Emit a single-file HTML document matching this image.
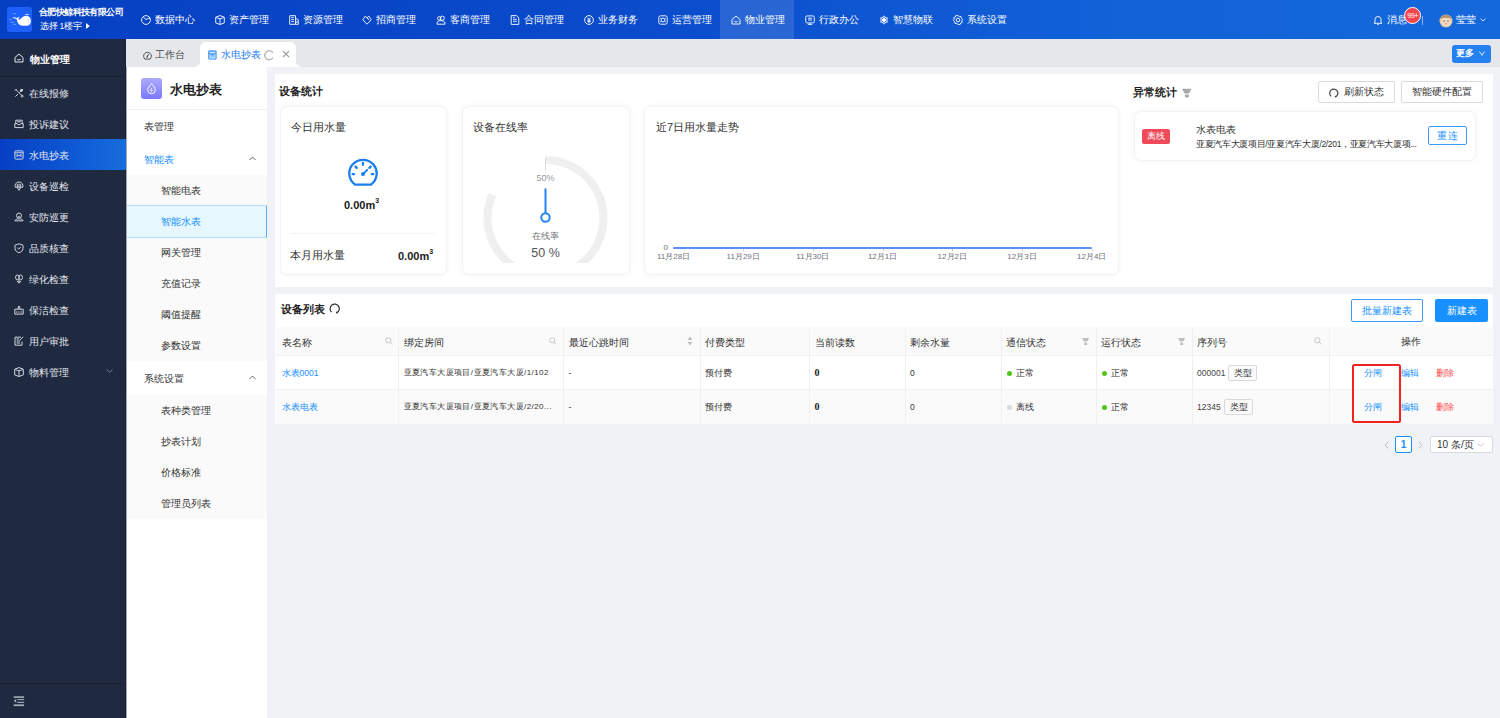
<!DOCTYPE html><html><head><meta charset="utf-8"><title>水电抄表</title><style>
*{box-sizing:border-box;margin:0;padding:0}
html,body{width:1500px;height:718px;overflow:hidden;background:#f0f2f5;font-family:"Liberation Sans",sans-serif;color:#262626}
.a{position:absolute;white-space:nowrap}
svg{display:block}
</style></head><body>
<div class="a" style="left:0;top:0;width:1500px;height:39px;background:linear-gradient(90deg,#0640c2 0%,#0a4acb 40%,#1262d8 75%,#1568dc 100%)"></div>
<div class="a" style="left:7px;top:7px;width:25px;height:25px;background:#1e60fb;border-radius:3px">
<svg width="25" height="25" viewBox="0 0 25 25">
<path d="M10 12.8C10.3 16.5 12.3 18.7 16 18.7L20 18.7C22.6 18.7 24 16.5 23.9 13.6C23.8 10.6 21.6 8.8 19 8.8C15.6 8.8 14.2 12.3 11.8 12.8Z" fill="#fff"/>
<path d="M10.6 13.4L8.6 11.6C7.6 11.3 6.6 11.6 5.6 11C6.6 9.9 8.4 10.2 9.6 11.2C10.4 10.4 11.5 10.1 12.6 10.6C11.8 11.2 11.4 12.2 11.3 13.2Z" fill="#fff"/>
<path d="M6 6.6h3.2 M2.2 12.4h2.8 M3.4 15.3h3.6 M6.1 17.4h3" stroke="#cfe0ff" stroke-width="0.55" opacity="0.8"/>
<path d="M18.6 7.4h3" stroke="#fff" stroke-width="0.9" stroke-linecap="round" opacity="0.85"/>
<circle cx="21.5" cy="12.6" r="0.5" fill="#9bb8ff"/><circle cx="21.5" cy="15" r="0.5" fill="#9bb8ff"/>
</svg></div>
<div class="a" style="left:39px;top:6px;font-size:9px;font-weight:bold;color:#fff;line-height:12px;letter-spacing:-0.6px">合肥快鲸科技有限公司</div>
<div class="a" style="left:39.5px;top:20px;font-size:8.5px;color:#fff;line-height:12px">选择</div><div class="a" style="left:59.5px;top:20px;font-size:8.5px;color:#fff;line-height:12px">1</div><div class="a" style="left:64px;top:20px;font-size:8.5px;color:#fff;line-height:12px">楼宇</div>
<svg class="a" style="left:86px;top:22.5px" width="4" height="6" viewBox="0 0 4 6" fill="#fff"><path d="M0 0l3.8 3L0 6z"/></svg>
<div class="a" style="left:130.0px;top:0;width:74px;height:39px;"><svg class="a" style="left:11px;top:15px" width="10" height="10" viewBox="0 0 10 10" fill="none" stroke="#fff" stroke-width="0.9"><circle cx="5" cy="5" r="4.4"/><path d="M2.4 2.2L5 4.6l2.3-1.3h2"/></svg><div class="a" style="left:25px;top:14px;font-size:10px;line-height:11px;color:#fff">数据中心</div></div>
<div class="a" style="left:203.8px;top:0;width:74px;height:39px;"><svg class="a" style="left:11px;top:15px" width="10" height="10" viewBox="0 0 10 10" fill="none" stroke="#fff" stroke-width="0.9"><path d="M5 0.6l4.3 1.6v5.7L5 9.5 0.7 7.9V2.2z M1.2 2.5L5 3.9l3.8-1.4 M5 3.9v5.3"/></svg><div class="a" style="left:25px;top:14px;font-size:10px;line-height:11px;color:#fff">资产管理</div></div>
<div class="a" style="left:277.6px;top:0;width:74px;height:39px;"><svg class="a" style="left:11px;top:15px" width="10" height="10" viewBox="0 0 10 10" fill="none" stroke="#fff" stroke-width="0.9"><path d="M0.7 0.7h5.8v8.6H0.7z M6.5 3.2l2.8 1.6v4.5H6.5 M2.3 2.6h2.6 M2.3 4.6h2.6 M2.3 6.6h2.6 M7.9 5.8v2.2"/></svg><div class="a" style="left:25px;top:14px;font-size:10px;line-height:11px;color:#fff">资源管理</div></div>
<div class="a" style="left:351.4px;top:0;width:74px;height:39px;"><svg class="a" style="left:11px;top:15px" width="10" height="10" viewBox="0 0 10 10" fill="none" stroke="#fff" stroke-width="0.9"><path d="M5 2.8L3.2 1.2 0.8 4.8 5 9.2l4.2-4.4-2.4-3.6z M5 2.8l2 2.2"/></svg><div class="a" style="left:25px;top:14px;font-size:10px;line-height:11px;color:#fff">招商管理</div></div>
<div class="a" style="left:425.2px;top:0;width:74px;height:39px;"><svg class="a" style="left:11px;top:15px" width="10" height="10" viewBox="0 0 10 10" fill="none" stroke="#fff" stroke-width="0.9"><circle cx="3.2" cy="3.4" r="1.7"/><circle cx="6.3" cy="3.2" r="2.1"/><path d="M1 9.2h8V8c0-1.4-1.8-2.3-4-2.3S1 6.6 1 8z"/></svg><div class="a" style="left:25px;top:14px;font-size:10px;line-height:11px;color:#fff">客商管理</div></div>
<div class="a" style="left:499.0px;top:0;width:74px;height:39px;"><svg class="a" style="left:11px;top:15px" width="10" height="10" viewBox="0 0 10 10" fill="none" stroke="#fff" stroke-width="0.9"><path d="M1.2 0.6h5.3l2.3 2.3v6.5H1.2z M3 4.3h3.8 M3 6.3h3.8 M3 2.4h1.6"/></svg><div class="a" style="left:25px;top:14px;font-size:10px;line-height:11px;color:#fff">合同管理</div></div>
<div class="a" style="left:572.8px;top:0;width:74px;height:39px;"><svg class="a" style="left:11px;top:15px" width="10" height="10" viewBox="0 0 10 10" fill="none" stroke="#fff" stroke-width="0.9"><circle cx="5" cy="5" r="4.4"/><path d="M3.4 2.6L5 4.6l1.6-2 M3.3 5.1h3.4 M3.3 6.6h3.4 M5 4.6v3.6"/></svg><div class="a" style="left:25px;top:14px;font-size:10px;line-height:11px;color:#fff">业务财务</div></div>
<div class="a" style="left:646.6px;top:0;width:74px;height:39px;"><svg class="a" style="left:11px;top:15px" width="10" height="10" viewBox="0 0 10 10" fill="none" stroke="#fff" stroke-width="0.9"><rect x="0.8" y="0.8" width="8.4" height="8.4" rx="1.8"/><circle cx="5" cy="5" r="1.9"/><path d="M2.2 3l1 0.8 M7.8 3l-1 0.8 M2.2 7l1-0.8 M7.8 7l-1-0.8"/></svg><div class="a" style="left:25px;top:14px;font-size:10px;line-height:11px;color:#fff">运营管理</div></div>
<div class="a" style="left:720.4px;top:0;width:74px;height:39px;background:rgba(255,255,255,0.12);"><svg class="a" style="left:11px;top:15px" width="10" height="10" viewBox="0 0 10 10" fill="none" stroke="#fff" stroke-width="0.9"><path d="M1 4.5L5 1l4 3.5V9H1z M3.3 6.3c0.8 0.8 2.6 0.8 3.4 0"/></svg><div class="a" style="left:25px;top:14px;font-size:10px;line-height:11px;color:#fff">物业管理</div></div>
<div class="a" style="left:794.2px;top:0;width:74px;height:39px;"><svg class="a" style="left:11px;top:15px" width="10" height="10" viewBox="0 0 10 10" fill="none" stroke="#fff" stroke-width="0.9"><rect x="0.7" y="0.9" width="8.6" height="7" rx="1.5"/><path d="M2.8 9.4h4.4 M5 7.9v1.5 M3 3.2h4 M3 5h4"/></svg><div class="a" style="left:25px;top:14px;font-size:10px;line-height:11px;color:#fff">行政办公</div></div>
<div class="a" style="left:868.0px;top:0;width:74px;height:39px;"><svg class="a" style="left:11px;top:15px" width="10" height="10" viewBox="0 0 10 10" fill="none" stroke="#fff" stroke-width="0.9"><circle cx="5" cy="5" r="1.6" fill="#fff"/><circle cx="5" cy="5" r="3.2"/><path d="M5 0.6v1.2 M5 8.2v1.2 M1.2 2.8l1 0.6 M7.8 6.6l1 0.6 M8.8 2.8l-1 0.6 M2.2 6.6l-1 0.6"/></svg><div class="a" style="left:25px;top:14px;font-size:10px;line-height:11px;color:#fff">智慧物联</div></div>
<div class="a" style="left:941.8px;top:0;width:74px;height:39px;"><svg class="a" style="left:11px;top:15px" width="10" height="10" viewBox="0 0 10 10" fill="none" stroke="#fff" stroke-width="0.9"><path d="M5 0.5l1.3 1.1 1.7-0.1 0.3 1.7 1.3 1.1-0.8 1.5 0.5 1.6-1.6 0.6-0.6 1.6-1.7-0.2L5 9.5 3.7 8.4 2 8.5 1.7 6.8 0.4 5.7 1.2 4.2 0.7 2.6l1.6-0.6 0.6-1.6 1.7 0.2z"/><circle cx="5" cy="5" r="1.8"/></svg><div class="a" style="left:25px;top:14px;font-size:10px;line-height:11px;color:#fff">系统设置</div></div>
<svg class="a" style="left:1373px;top:15px" width="10" height="10" viewBox="0 0 10 10" fill="none" stroke="#fff" stroke-width="0.9"><path d="M2 7.5V4.5a3 3 0 0 1 6 0v3l1 0.8H1z M4 9.3h2"/></svg>
<div class="a" style="left:1387px;top:14px;font-size:10px;line-height:11px;color:#fff">消息</div>
<div class="a" style="left:1404px;top:7px;width:17px;height:17px;border-radius:50%;background:#f4454f;border:1px solid #fff;color:#fff;font-size:7px;line-height:15px;text-align:center;letter-spacing:-0.4px">99+</div>
<div class="a" style="left:1422px;top:15.5px;width:1px;height:9.5px;background:rgba(255,255,255,0.5)"></div>
<svg class="a" style="left:1439px;top:14px" width="14" height="14" viewBox="0 0 14 14"><circle cx="7" cy="7" r="6.5" fill="#e8c9a5"/><circle cx="7" cy="7.6" r="4.6" fill="#f3dcc3"/><path d="M1.5 5c1-3 3-4 5.5-4s4.5 1 5.5 4c-1.5-1-3-1.3-5.5-1.3S3 4 1.5 5z" fill="#b88a60"/><circle cx="5" cy="7" r="0.7" fill="#553"/><circle cx="9" cy="7" r="0.7" fill="#553"/><path d="M6 9.8h2" stroke="#a66" stroke-width="0.6"/></svg>
<div class="a" style="left:1456px;top:14px;font-size:10px;line-height:11px;color:#fff">莹莹</div>
<svg class="a" style="left:1480px;top:18px" width="6" height="4" viewBox="0 0 6 4" fill="none" stroke="#fff" stroke-width="0.8"><path d="M0.5 0.5L3 3l2.5-2.5"/></svg>
<div class="a" style="left:0;top:39px;width:126px;height:679px;background:#1f2940"></div>
<div class="a" style="left:0;top:76px;width:126px;height:1px;background:#19202f"></div>
<div class="a" style="left:125px;top:39px;width:1px;height:679px;background:#1a2138"></div>
<svg class="a" style="left:14px;top:53px" width="10" height="10" viewBox="0 0 10 10" fill="none" stroke="#fff" stroke-width="0.9"><path d="M1 4.5L5 1l4 3.5V9H1z M3.3 6.3c0.8 0.8 2.6 0.8 3.4 0"/></svg>
<div class="a" style="left:30px;top:53.5px;font-size:10px;font-weight:bold;line-height:11px;color:#fff">物业管理</div>
<svg class="a" style="left:13.5px;top:87.5px" width="10" height="10" viewBox="0 0 10 10" fill="none" stroke="#d2d6df" stroke-width="1"><path d="M1.5 1.2l6.8 6.8 M1 2.6l1.6-1.6 M6.8 8.2l1.5 1 0.9-0.9-1-1.5 M8.6 1.4L5.5 4.5 M8.6 1.4l-1.9 0.2-0.2 1.4 1.5 0.4z M4 6L1.4 8.6"/></svg>
<div class="a" style="left:29px;top:88px;font-size:10px;line-height:11px;color:#e3e7ee">在线报修</div>
<svg class="a" style="left:13.5px;top:118.5px" width="10" height="10" viewBox="0 0 10 10" fill="none" stroke="#d2d6df" stroke-width="1"><path d="M1.8 4.6V1.2h6.4v3.4 M0.8 4.6h2.4l0.7 1h2.2l0.7-1h2.4v4H0.8z M3.2 2.8h3.6"/></svg>
<div class="a" style="left:29px;top:119px;font-size:10px;line-height:11px;color:#e3e7ee">投诉建议</div>
<div class="a" style="left:0;top:139px;width:126px;height:31px;background:linear-gradient(90deg,#073fc4 0%,#0d55d2 50%,#176ddd 100%)"></div>
<svg class="a" style="left:13.5px;top:149.5px" width="10" height="10" viewBox="0 0 10 10" fill="none" stroke="#d2d6df" stroke-width="1"><rect x="0.9" y="0.9" width="8.2" height="8.2" rx="1"/><path d="M3 7V4.5l2 1.5 2-1.5V7 M0.9 2.8h8.2"/></svg>
<div class="a" style="left:29px;top:150px;font-size:10px;line-height:11px;color:#e3e7ee">水电抄表</div>
<svg class="a" style="left:13.5px;top:180.5px" width="10" height="10" viewBox="0 0 10 10" fill="none" stroke="#d2d6df" stroke-width="1"><path d="M1.2 6.2A4 4 0 1 1 8.8 6.2z M3.2 6.2L5 9.3l1.8-3.1 M3.3 3v3 M5 2.5v3.5 M6.7 3v3"/></svg>
<div class="a" style="left:29px;top:181px;font-size:10px;line-height:11px;color:#e3e7ee">设备巡检</div>
<svg class="a" style="left:13.5px;top:211.5px" width="10" height="10" viewBox="0 0 10 10" fill="none" stroke="#d2d6df" stroke-width="1"><circle cx="5" cy="3.6" r="2.5"/><path d="M4.2 4.4h1.6 M0.9 8.8c0.6-1.5 2-2 4.1-2s3.5 0.5 4.1 2z"/></svg>
<div class="a" style="left:29px;top:212px;font-size:10px;line-height:11px;color:#e3e7ee">安防巡更</div>
<svg class="a" style="left:13.5px;top:242.5px" width="10" height="10" viewBox="0 0 10 10" fill="none" stroke="#d2d6df" stroke-width="1"><path d="M5 0.8l4 1.4v3.2c0 2.4-2 3.7-4 4.4-2-0.7-4-2-4-4.4V2.2z M3.3 4.8l1.4 1.3 2.1-2.2"/></svg>
<div class="a" style="left:29px;top:243px;font-size:10px;line-height:11px;color:#e3e7ee">品质核查</div>
<svg class="a" style="left:13.5px;top:273.5px" width="10" height="10" viewBox="0 0 10 10" fill="none" stroke="#d2d6df" stroke-width="1"><ellipse cx="3.4" cy="3.4" rx="1.9" ry="2.4"/><ellipse cx="6.6" cy="3.4" rx="1.9" ry="2.4"/><path d="M5 5.8v3.7 M2.8 7.2L5 8.4l2.2-1.2"/></svg>
<div class="a" style="left:29px;top:274px;font-size:10px;line-height:11px;color:#e3e7ee">绿化检查</div>
<svg class="a" style="left:13.5px;top:304.5px" width="10" height="10" viewBox="0 0 10 10" fill="none" stroke="#d2d6df" stroke-width="1"><path d="M0.8 4.2h8.4v4.9H0.8z M3.8 4.2l0.9-3h0.6l0.9 3 M2.8 6.3v1.5 M5 6.3v1.5 M7.2 6.3v1.5"/></svg>
<div class="a" style="left:29px;top:305px;font-size:10px;line-height:11px;color:#e3e7ee">保洁检查</div>
<svg class="a" style="left:13.5px;top:335.5px" width="10" height="10" viewBox="0 0 10 10" fill="none" stroke="#d2d6df" stroke-width="1"><path d="M7 1.2H1v8h7V5.5 M2.6 3h2.4 M2.6 5h3.4 M2.6 7h3.4 M5.8 4.2L9.2 0.8"/></svg>
<div class="a" style="left:29px;top:336px;font-size:10px;line-height:11px;color:#e3e7ee">用户审批</div>
<svg class="a" style="left:13.5px;top:366.5px" width="10" height="10" viewBox="0 0 10 10" fill="none" stroke="#d2d6df" stroke-width="1"><path d="M5 0.6l4.3 1.6v5.7L5 9.5 0.7 7.9V2.2z M1.2 2.5L5 3.9l3.8-1.4 M5 3.9v5.3"/></svg>
<div class="a" style="left:29px;top:367px;font-size:10px;line-height:11px;color:#e3e7ee">物料管理</div>
<svg class="a" style="left:106px;top:369px" width="7" height="4" viewBox="0 0 7 4" fill="none" stroke="#8a93a6" stroke-width="0.8"><path d="M0.5 0.5L3.5 3.3l3-2.8"/></svg>
<div class="a" style="left:0;top:683px;width:125px;height:1px;background:#1b2130"></div>
<svg class="a" style="left:13px;top:696px" width="12" height="11" viewBox="0 0 12 11" fill="#a9afbc"><rect x="0.7" y="0.3" width="10.4" height="1.6"/><rect x="4.3" y="3.1" width="6.8" height="1"/><rect x="4.3" y="5.8" width="6.8" height="1.1"/><rect x="0.7" y="8.4" width="10.4" height="1.7"/><path d="M0.8 4.8L3.2 2.9v3.8z"/></svg>
<div class="a" style="left:126px;top:39px;width:1374px;height:28px;background:#e5e7ea"></div>
<svg class="a" style="left:142.5px;top:50.5px" width="9" height="9" viewBox="0 0 9 9" fill="none" stroke="#555" stroke-width="1"><path d="M1.9 8.1A3.9 3.9 0 1 1 7.1 8.1z" stroke-linejoin="round"/><path d="M4.3 5.6L5.6 3.2" stroke-width="1.1"/><circle cx="4.2" cy="5.8" r="0.9" fill="#555" stroke="none"/></svg>
<div class="a" style="left:155px;top:49px;font-size:10px;line-height:11px;color:#444">工作台</div>
<svg class="a" style="left:192.5px;top:42px" width="110" height="25" viewBox="0 0 110 25"><path d="M0 25c4 0 7-2 7-6V6c0-3.3 2.7-6 6-6h84c3.3 0 6 2.7 6 6v13c0 4 3 6 7 6z" fill="#fff"/></svg>
<svg class="a" style="left:208px;top:50px" width="9" height="10" viewBox="0 0 9 10"><rect x="0" y="0.3" width="8.8" height="9.4" rx="1.6" fill="#5ea6f8"/><path d="M1.8 2.5h5.2 M2 4.5v3.5h4.8V4.5 M3.5 6.2h1.8" stroke="#fff" stroke-width="0.8" fill="none"/></svg>
<div class="a" style="left:221px;top:49px;font-size:10px;line-height:11px;color:#1a7cf0">水电抄表</div>
<svg class="a" style="left:263.5px;top:49.5px" width="11" height="11" viewBox="0 0 11 11" fill="none" stroke="#a0a0a0" stroke-width="1.1"><path d="M8.9 2.7A4.5 4.5 0 1 0 8.9 7.8"/></svg>
<svg class="a" style="left:281.5px;top:50px" width="8" height="8" viewBox="0 0 8 8" fill="none" stroke="#a0a0a0" stroke-width="1.1"><path d="M1 1l6 6 M7 1L1 7"/></svg>
<div class="a" style="left:1451.5px;top:45px;width:39px;height:17.5px;background:#2581ef;border-radius:3px;color:#fff;font-size:9px;font-weight:bold;line-height:17px;padding-left:4.5px">更多</div>
<svg class="a" style="left:1479px;top:50.5px" width="6" height="5" viewBox="0 0 6 5" fill="none" stroke="#fff" stroke-width="0.8"><path d="M0.5 0.5L3 4.3l2.5-3.8"/></svg>
<div class="a" style="left:126px;top:67px;width:141px;height:651px;background:#fff"></div>
<div class="a" style="left:126px;top:67px;width:1px;height:651px;background:#a4a8b3"></div>
<div class="a" style="left:141px;top:78px;width:21px;height:21px;border-radius:3px;background:linear-gradient(180deg,#acabfd,#7a78fa)"><svg width="21" height="21" viewBox="0 0 21 21" fill="none" stroke="#fff" stroke-width="0.9"><path d="M10.5 5.5c2 2.5 3.8 4.5 3.8 6.5a3.8 3.8 0 0 1-7.6 0c0-2 1.8-4 3.8-6.5z"/><path d="M11 9.8l-1.5 2.4h2l-1.5 2.3" stroke-width="0.8"/></svg></div>
<div class="a" style="left:170px;top:83px;font-size:12.5px;font-weight:bold;line-height:14px;color:#1f1f1f">水电抄表</div>
<div class="a" style="left:127px;top:109px;width:140px;height:1px;background:#f0f0f0"></div>
<div class="a" style="left:144px;top:121.0px;font-size:10px;line-height:11px;color:#333;">表管理</div>
<div class="a" style="left:144px;top:153.5px;font-size:10px;line-height:11px;color:#1890ff;">智能表</div>
<svg class="a" style="left:249px;top:156px" width="7" height="5" viewBox="0 0 7 5" fill="none" stroke="#555" stroke-width="0.9"><path d="M0.5 4L3.5 1l3 3"/></svg>
<div class="a" style="left:127px;top:175px;width:140px;height:186px;background:#fafafa"></div>
<div class="a" style="left:127px;top:205px;width:140px;height:33px;background:#e6f7ff;border:1px solid #b3dcff;border-left:none;border-right:1px solid #5aaeff"></div>
<div class="a" style="left:161px;top:185.0px;font-size:10px;line-height:11px;color:#333;">智能电表</div>
<div class="a" style="left:161px;top:216.0px;font-size:10px;line-height:11px;color:#1890ff;">智能水表</div>
<div class="a" style="left:161px;top:247.0px;font-size:10px;line-height:11px;color:#333;">网关管理</div>
<div class="a" style="left:161px;top:278.0px;font-size:10px;line-height:11px;color:#333;">充值记录</div>
<div class="a" style="left:161px;top:309.0px;font-size:10px;line-height:11px;color:#333;">阈值提醒</div>
<div class="a" style="left:161px;top:340.0px;font-size:10px;line-height:11px;color:#333;">参数设置</div>
<div class="a" style="left:144px;top:372.5px;font-size:10px;line-height:11px;color:#333;">系统设置</div>
<svg class="a" style="left:249px;top:375px" width="7" height="5" viewBox="0 0 7 5" fill="none" stroke="#555" stroke-width="0.9"><path d="M0.5 4L3.5 1l3 3"/></svg>
<div class="a" style="left:127px;top:395px;width:140px;height:124px;background:#fafafa"></div>
<div class="a" style="left:161px;top:405.0px;font-size:10px;line-height:11px;color:#333;">表种类管理</div>
<div class="a" style="left:161px;top:436.0px;font-size:10px;line-height:11px;color:#333;">抄表计划</div>
<div class="a" style="left:161px;top:467.0px;font-size:10px;line-height:11px;color:#333;">价格标准</div>
<div class="a" style="left:161px;top:498.0px;font-size:10px;line-height:11px;color:#333;">管理员列表</div>
<div class="a" style="left:275px;top:74px;width:1218px;height:213px;background:#fff;border-radius:1px"></div>
<div class="a" style="left:279px;top:85px;font-size:11px;font-weight:bold;line-height:12px;color:#1f1f1f">设备统计</div>
<div class="a" style="left:280px;top:106px;width:167px;height:168.5px;background:#fff;border-radius:7px;box-shadow:0 0 5px 1px rgba(0,0,0,0.035);border:1px solid #f3f3f3"></div>
<div class="a" style="left:462px;top:106px;width:168px;height:168.5px;background:#fff;border-radius:7px;box-shadow:0 0 5px 1px rgba(0,0,0,0.035);border:1px solid #f3f3f3"></div>
<div class="a" style="left:644px;top:106px;width:475px;height:168.5px;background:#fff;border-radius:7px;box-shadow:0 0 5px 1px rgba(0,0,0,0.035);border:1px solid #f3f3f3"></div>
<div class="a" style="left:291px;top:121px;font-size:11px;line-height:12px;color:#333">今日用水量</div>
<svg class="a" style="left:348px;top:158px" width="30" height="30" viewBox="0 0 30 30" fill="none" stroke="#1a7ef2" stroke-width="2.3" stroke-linecap="round"><path d="M7 26.6A13.7 13.7 0 1 1 23 26.6z" stroke-linejoin="round"/><path d="M15 5v1.8 M4.6 16.1h1.6 M23.8 16.1h1.6 M7.5 8.6l1.3 1.3 M22.6 8.6l-1.3 1.3"/><path d="M15 16.1l4.2-4.2" stroke-width="2"/><circle cx="15" cy="16.1" r="2" fill="#1a7ef2" stroke="none"/></svg>
<div class="a" style="left:344px;top:196px;font-size:11px;font-weight:bold;line-height:12px;color:#222">0.00m<sup style="font-size:7px;position:relative;top:-1px">3</sup></div>
<div class="a" style="left:290px;top:233px;width:145px;height:1px;background:#f2f2f2"></div>
<div class="a" style="left:290px;top:249px;font-size:11px;line-height:12px;color:#333">本月用水量</div>
<div class="a" style="left:398px;top:246.5px;font-size:11px;font-weight:bold;line-height:12px;color:#222">0.00m<sup style="font-size:7px;position:relative;top:-1px">3</sup></div>
<div class="a" style="left:473px;top:121px;font-size:11px;line-height:12px;color:#333">设备在线率</div>
<div class="a" style="left:470px;top:140px;width:155px;height:123px;overflow:hidden"><svg width="155" height="140" viewBox="0 0 155 140" style="position:absolute;left:0;top:0">
<g transform="translate(75.5,78)" fill="none" stroke="#efefef" stroke-width="8">
<path d="M0,-58 A58 58 0 1 1 -41,41"/>
<path d="M-41,41 A58 58 0 0 1 -53,-23.5"/>
</g>
<path d="M75.5,18 v13" stroke="#d4d4d4" stroke-width="0.8"/>
<line x1="75.5" y1="48.5" x2="75.5" y2="73" stroke="#2185f6" stroke-width="2"/>
<circle cx="75.5" cy="77.5" r="4.2" fill="#fff" stroke="#2185f6" stroke-width="2"/>
</svg></div>
<div class="a" style="left:470px;top:173px;width:151px;text-align:center;font-size:9px;line-height:11px;color:#999">50%</div>
<div class="a" style="left:470px;top:231px;width:151px;text-align:center;font-size:9px;line-height:11px;color:#777">在线率</div>
<div class="a" style="left:470px;top:246px;width:151px;text-align:center;font-size:12.5px;line-height:14px;color:#555">50 %</div>
<div class="a" style="left:656px;top:121px;font-size:11px;line-height:12px;color:#333">近7日用水量走势</div>
<div class="a" style="left:663.5px;top:243px;font-size:8px;line-height:9px;color:#6e7079">0</div>
<div class="a" style="left:673px;top:247.3px;width:419px;height:2px;background:#5b8ff9;border-radius:1px"></div>
<div class="a" style="left:643.5px;top:252px;width:60px;text-align:center;font-size:8px;line-height:9px;color:#6e7079">11月28日</div>
<div class="a" style="left:743.2px;top:249px;width:1px;height:2px;background:#ccc"></div>
<div class="a" style="left:713.2px;top:252px;width:60px;text-align:center;font-size:8px;line-height:9px;color:#6e7079">11月29日</div>
<div class="a" style="left:812.9px;top:249px;width:1px;height:2px;background:#ccc"></div>
<div class="a" style="left:782.9px;top:252px;width:60px;text-align:center;font-size:8px;line-height:9px;color:#6e7079">11月30日</div>
<div class="a" style="left:882.6px;top:249px;width:1px;height:2px;background:#ccc"></div>
<div class="a" style="left:852.6px;top:252px;width:60px;text-align:center;font-size:8px;line-height:9px;color:#6e7079">12月1日</div>
<div class="a" style="left:952.3px;top:249px;width:1px;height:2px;background:#ccc"></div>
<div class="a" style="left:922.3px;top:252px;width:60px;text-align:center;font-size:8px;line-height:9px;color:#6e7079">12月2日</div>
<div class="a" style="left:1022.0px;top:249px;width:1px;height:2px;background:#ccc"></div>
<div class="a" style="left:992.0px;top:252px;width:60px;text-align:center;font-size:8px;line-height:9px;color:#6e7079">12月3日</div>
<div class="a" style="left:1091.7px;top:249px;width:1px;height:2px;background:#ccc"></div>
<div class="a" style="left:1061.7px;top:252px;width:60px;text-align:center;font-size:8px;line-height:9px;color:#6e7079">12月4日</div>
<div class="a" style="left:1133px;top:86px;font-size:11px;font-weight:bold;line-height:12px;color:#1f1f1f">异常统计</div>
<svg class="a" style="left:1182px;top:88px" width="10" height="10" viewBox="0 0 10 10" fill="#a8a8a8"><path d="M0 0.8h9.6L6.9 5.6H2.7z"/><rect x="3" y="6.6" width="3.8" height="2.8"/></svg>
<div class="a" style="left:1318px;top:81px;width:77px;height:22px;border:1px solid #d9d9d9;border-radius:2px;background:#fff;font-size:10px;line-height:20px;color:#333;text-align:center;padding-left:14px">刷新状态</div>
<svg class="a" style="left:1328px;top:87px" width="12" height="12" viewBox="0 0 12 12" fill="none" stroke="#444" stroke-width="1.2"><path d="M3 9.2A4.1 4.1 0 1 1 7.7 9.8"/><circle cx="7.6" cy="9.6" r="0.9" fill="#444" stroke="none"/></svg>
<div class="a" style="left:1401px;top:81px;width:82px;height:22px;border:1px solid #d9d9d9;border-radius:2px;background:#fff;font-size:10px;line-height:20px;color:#333;text-align:center">智能硬件配置</div>
<div class="a" style="left:1134px;top:111px;width:342px;height:50px;background:#fff;border-radius:7px;box-shadow:0 0 5px 1px rgba(0,0,0,0.035);border:1px solid #f3f3f3"></div>
<div class="a" style="left:1142px;top:129px;width:28px;height:15px;background:#f04a5a;border-radius:2px;color:#fff;font-size:8.5px;line-height:15px;text-align:center">离线</div>
<div class="a" style="left:1196px;top:124px;font-size:9.5px;line-height:11px;color:#333">水表电表</div>
<div class="a" style="left:1196px;top:139px;font-size:8.5px;letter-spacing:-0.33px;line-height:11px;color:#333">亚夏汽车大厦项目/亚夏汽车大厦/2/201，亚夏汽车大厦项...</div>
<div class="a" style="left:1428px;top:126px;width:39px;height:19px;border:1px solid #3a9bff;border-radius:2px;color:#1890ff;font-size:9.5px;line-height:17px;text-align:center;letter-spacing:1.5px;padding-left:1.5px">重连</div>
<div class="a" style="left:275px;top:294px;width:1218px;height:130px;background:#fff;border-radius:1px 1px 0 0"></div>
<div class="a" style="left:281px;top:303px;font-size:11px;font-weight:bold;line-height:12px;color:#1f1f1f">设备列表</div>
<svg class="a" style="left:328px;top:302px" width="13" height="13" viewBox="0 0 13 13" fill="none" stroke="#333" stroke-width="1.2"><path d="M3.6 10.1A4.6 4.6 0 1 1 8.8 10.8"/><circle cx="8.9" cy="10.6" r="1" fill="#333" stroke="none"/></svg>
<div class="a" style="left:1351px;top:299px;width:72px;height:23px;border:1px solid #3a9bff;border-radius:2px;color:#1890ff;font-size:10px;line-height:21px;text-align:center">批量新建表</div>
<div class="a" style="left:1435px;top:299px;width:53px;height:23px;background:#1890ff;border-radius:2px;color:#fff;font-size:10px;line-height:23px;text-align:center">新建表</div>
<div class="a" style="left:276px;top:327px;width:1217px;height:28px;background:#fafafa"></div>
<div class="a" style="left:398px;top:327px;width:1px;height:97px;background:#f0f0f0"></div>
<div class="a" style="left:563px;top:327px;width:1px;height:97px;background:#f0f0f0"></div>
<div class="a" style="left:699.5px;top:327px;width:1px;height:97px;background:#f0f0f0"></div>
<div class="a" style="left:809px;top:327px;width:1px;height:97px;background:#f0f0f0"></div>
<div class="a" style="left:904.5px;top:327px;width:1px;height:97px;background:#f0f0f0"></div>
<div class="a" style="left:1000.5px;top:327px;width:1px;height:97px;background:#f0f0f0"></div>
<div class="a" style="left:1095.5px;top:327px;width:1px;height:97px;background:#f0f0f0"></div>
<div class="a" style="left:1191.5px;top:327px;width:1px;height:97px;background:#f0f0f0"></div>
<div class="a" style="left:1328.5px;top:327px;width:1px;height:97px;background:#f0f0f0"></div>
<div class="a" style="left:276px;top:355px;width:1217px;height:1px;background:#f0f0f0"></div>
<div class="a" style="left:276px;top:389px;width:1217px;height:1px;background:#f0f0f0"></div>
<div class="a" style="left:276px;top:390px;width:1217px;height:34px;background:#fafafa"></div>
<div class="a" style="left:398px;top:390px;width:1px;height:34px;background:#f0f0f0"></div>
<div class="a" style="left:563px;top:390px;width:1px;height:34px;background:#f0f0f0"></div>
<div class="a" style="left:699.5px;top:390px;width:1px;height:34px;background:#f0f0f0"></div>
<div class="a" style="left:809px;top:390px;width:1px;height:34px;background:#f0f0f0"></div>
<div class="a" style="left:904.5px;top:390px;width:1px;height:34px;background:#f0f0f0"></div>
<div class="a" style="left:1000.5px;top:390px;width:1px;height:34px;background:#f0f0f0"></div>
<div class="a" style="left:1095.5px;top:390px;width:1px;height:34px;background:#f0f0f0"></div>
<div class="a" style="left:1191.5px;top:390px;width:1px;height:34px;background:#f0f0f0"></div>
<div class="a" style="left:1328.5px;top:390px;width:1px;height:34px;background:#f0f0f0"></div>
<div class="a" style="left:281.5px;top:337px;font-size:10px;line-height:11px;color:#333">表名称</div>
<div class="a" style="left:403.5px;top:337px;font-size:10px;line-height:11px;color:#333">绑定房间</div>
<div class="a" style="left:568.5px;top:337px;font-size:10px;line-height:11px;color:#333">最近心跳时间</div>
<div class="a" style="left:705.0px;top:337px;font-size:10px;line-height:11px;color:#333">付费类型</div>
<div class="a" style="left:814.5px;top:337px;font-size:10px;line-height:11px;color:#333">当前读数</div>
<div class="a" style="left:910.0px;top:337px;font-size:10px;line-height:11px;color:#333">剩余水量</div>
<div class="a" style="left:1006.0px;top:337px;font-size:10px;line-height:11px;color:#333">通信状态</div>
<div class="a" style="left:1101.0px;top:337px;font-size:10px;line-height:11px;color:#333">运行状态</div>
<div class="a" style="left:1197.0px;top:337px;font-size:10px;line-height:11px;color:#333">序列号</div>
<div class="a" style="left:1328px;top:336px;width:165px;text-align:center;font-size:10px;line-height:11px;color:#333">操作</div>
<svg class="a" style="left:385px;top:337px" width="8" height="8" viewBox="0 0 8 8" fill="none" stroke="#bfbfbf" stroke-width="0.9"><circle cx="3.3" cy="3.3" r="2.6"/><path d="M5.2 5.2l2.2 2.2"/></svg>
<svg class="a" style="left:549px;top:337px" width="8" height="8" viewBox="0 0 8 8" fill="none" stroke="#bfbfbf" stroke-width="0.9"><circle cx="3.3" cy="3.3" r="2.6"/><path d="M5.2 5.2l2.2 2.2"/></svg>
<svg class="a" style="left:1314px;top:337px" width="8" height="8" viewBox="0 0 8 8" fill="none" stroke="#bfbfbf" stroke-width="0.9"><circle cx="3.3" cy="3.3" r="2.6"/><path d="M5.2 5.2l2.2 2.2"/></svg>
<svg class="a" style="left:1082px;top:338px" width="8" height="8" viewBox="0 0 8 8" fill="#bfbfbf"><path d="M0 0h7.2L5.2 3.4H2z"/><rect x="2.1" y="4.6" width="3" height="2.4"/></svg>
<svg class="a" style="left:1178px;top:338px" width="8" height="8" viewBox="0 0 8 8" fill="#bfbfbf"><path d="M0 0h7.2L5.2 3.4H2z"/><rect x="2.1" y="4.6" width="3" height="2.4"/></svg>
<svg class="a" style="left:687px;top:336px" width="6" height="10" viewBox="0 0 6 10" fill="#bfbfbf"><path d="M3 0.5L5.5 4h-5z M3 9.5L5.5 6h-5z"/></svg>
<div class="a" style="left:281.5px;top:367.5px;font-size:8.5px;line-height:10px;color:#1890ff">水表0001</div>
<div class="a" style="left:403.5px;top:367.5px;font-size:8px;letter-spacing:0.42px;line-height:10px;color:#333">亚夏汽车大厦项目/亚夏汽车大厦/1/102</div>
<div class="a" style="left:568.5px;top:367.5px;font-size:8.5px;line-height:10px;color:#333">-</div>
<div class="a" style="left:705.0px;top:367.5px;font-size:8.5px;line-height:10px;color:#333">预付费</div>
<div class="a" style="left:814.5px;top:367.5px;font-family:'Liberation Serif',serif;font-size:10px;font-weight:bold;line-height:10px;color:#222">0</div>
<div class="a" style="left:910.0px;top:367.5px;font-size:8.5px;line-height:10px;color:#333">0</div>
<div class="a" style="left:1007.0px;top:370.5px;width:5px;height:5px;border-radius:50%;background:#52c41a"></div>
<div class="a" style="left:1016.0px;top:367.5px;font-size:9px;line-height:10px;color:#333">正常</div>
<div class="a" style="left:1102.0px;top:370.5px;width:5px;height:5px;border-radius:50%;background:#52c41a"></div>
<div class="a" style="left:1111.0px;top:367.5px;font-size:9px;line-height:10px;color:#333">正常</div>
<div class="a" style="left:1197.0px;top:367.5px;font-size:8.5px;line-height:10px;color:#444">000001</div>
<div class="a" style="left:1228px;top:364.5px;width:29px;height:16px;border:1px solid #d9d9d9;border-radius:2px;background:#fafafa;font-size:9px;line-height:14px;text-align:center;color:#333">类型</div>
<div class="a" style="left:1364px;top:367.5px;font-size:9px;line-height:10px;color:#1890ff">分闸</div>
<div class="a" style="left:1401px;top:367.5px;font-size:9px;line-height:10px;color:#1890ff">编辑</div>
<div class="a" style="left:1436px;top:367.5px;font-size:9px;line-height:10px;color:#ff4d4f">删除</div>
<div class="a" style="left:281.5px;top:401.5px;font-size:8.5px;line-height:10px;color:#1890ff">水表电表</div>
<div class="a" style="left:403.5px;top:401.5px;font-size:8px;letter-spacing:0.42px;line-height:10px;color:#333">亚夏汽车大厦项目/亚夏汽车大厦/2/20...</div>
<div class="a" style="left:568.5px;top:401.5px;font-size:8.5px;line-height:10px;color:#333">-</div>
<div class="a" style="left:705.0px;top:401.5px;font-size:8.5px;line-height:10px;color:#333">预付费</div>
<div class="a" style="left:814.5px;top:401.5px;font-family:'Liberation Serif',serif;font-size:10px;font-weight:bold;line-height:10px;color:#222">0</div>
<div class="a" style="left:910.0px;top:401.5px;font-size:8.5px;line-height:10px;color:#333">0</div>
<div class="a" style="left:1007.0px;top:404.5px;width:5px;height:5px;border-radius:50%;background:#d9d9d9"></div>
<div class="a" style="left:1016.0px;top:401.5px;font-size:9px;line-height:10px;color:#333">离线</div>
<div class="a" style="left:1102.0px;top:404.5px;width:5px;height:5px;border-radius:50%;background:#52c41a"></div>
<div class="a" style="left:1111.0px;top:401.5px;font-size:9px;line-height:10px;color:#333">正常</div>
<div class="a" style="left:1197.0px;top:401.5px;font-size:8.5px;line-height:10px;color:#444">12345</div>
<div class="a" style="left:1224px;top:398.5px;width:29px;height:16px;border:1px solid #d9d9d9;border-radius:2px;background:#fafafa;font-size:9px;line-height:14px;text-align:center;color:#333">类型</div>
<div class="a" style="left:1364px;top:401.5px;font-size:9px;line-height:10px;color:#1890ff">分闸</div>
<div class="a" style="left:1401px;top:401.5px;font-size:9px;line-height:10px;color:#1890ff">编辑</div>
<div class="a" style="left:1436px;top:401.5px;font-size:9px;line-height:10px;color:#ff4d4f">删除</div>
<div class="a" style="left:1352px;top:364px;width:49px;height:59px;border:2px solid #f2231e;border-radius:2.5px"></div>
<svg class="a" style="left:1384px;top:441px" width="5" height="8" viewBox="0 0 5 8" fill="none" stroke="#bbb" stroke-width="0.9"><path d="M4.5 0.5L1 4l3.5 3.5"/></svg>
<div class="a" style="left:1395px;top:436px;width:17px;height:17px;border:1px solid #1890ff;border-radius:2px;background:#fff;color:#1890ff;font-size:10px;font-weight:bold;line-height:15px;text-align:center">1</div>
<svg class="a" style="left:1418px;top:441px" width="5" height="8" viewBox="0 0 5 8" fill="none" stroke="#bbb" stroke-width="0.9"><path d="M0.5 0.5L4 4 0.5 7.5"/></svg>
<div class="a" style="left:1430px;top:436px;width:63px;height:17px;border:1px solid #d9d9d9;border-radius:2px;background:#fff;color:#333;font-size:10px;line-height:15px;padding-left:6px">10 条/页</div>
<svg class="a" style="left:1477px;top:443px" width="7" height="4" viewBox="0 0 7 4" fill="none" stroke="#bbb" stroke-width="0.8"><path d="M0.5 0.5L3.5 3.3l3-2.8"/></svg>
</body></html>
